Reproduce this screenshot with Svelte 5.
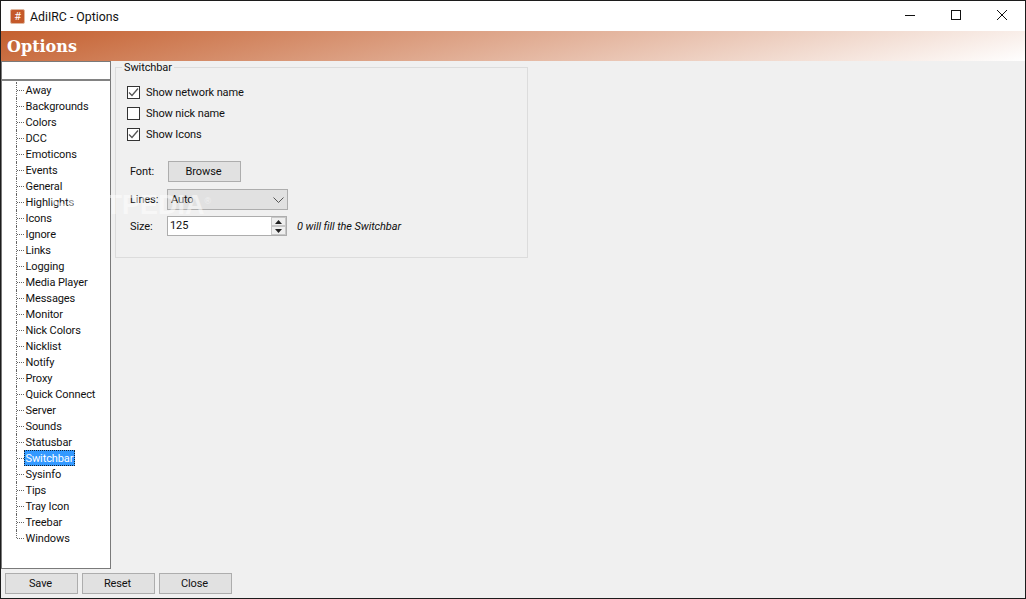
<script>
  const items = ['Away','Backgrounds','Colors','DCC','Emoticons','Events','General','Highlights','Icons','Ignore','Links','Logging','Media Player','Messages','Monitor','Nick Colors','Nicklist','Notify','Proxy','Quick Connect','Server','Sounds','Statusbar','Switchbar','Sysinfo','Tips','Tray Icon','Treebar','Windows'];
  const checks = [['Show network name',true],['Show nick name',false],['Show Icons',true]];
</script>

<div class="win">
  <header class="title">
    <span class="logo">#</span>
    <span class="ttext">AdiIRC - Options</span>
    <div class="caption">
      <svg width="46" height="30" viewBox="0 0 46 30"><path d="M18 14.5h10" stroke="#111" fill="none"/></svg>
      <svg width="46" height="30" viewBox="0 0 46 30"><rect x="18.5" y="9.5" width="9" height="9" stroke="#111" fill="none"/></svg>
      <svg width="46" height="30" viewBox="0 0 46 30"><path d="M18 9l10 10M28 9l-10 10" stroke="#111" fill="none"/></svg>
    </div>
  </header>
  <div class="banner">Options</div>
  <div class="main">
    <aside class="side">
      <div class="search"></div>
      <ul class="tree">
        {#each items as it}
          <li class="row" class:sel={it === 'Switchbar'}><span>{it}</span></li>
        {/each}
      </ul>
    </aside>
    <section class="content">
      <fieldset class="group">
        <legend>Switchbar</legend>
        <div class="checks">
          {#each checks as [label, on]}
            <div class="check">
              <span class="box">
                {#if on}<svg width="11" height="11" viewBox="0 0 11 11"><path d="M1 5.5l3 3 6-7" stroke="#555" stroke-width="1.3" fill="none"/></svg>{/if}
              </span>
              <span>{label}</span>
            </div>
          {/each}
        </div>
        <div class="frow font"><span class="lab">Font:</span><button class="btn browse">Browse</button></div>
        <div class="frow lines">
          <span class="lab">Lines:</span>
          <div class="combo"><span>Auto</span>
            <svg width="11" height="6" viewBox="0 0 11 6"><path d="M.5.5l5 5 5-5" stroke="#555" fill="none"/></svg>
          </div>
        </div>
        <div class="frow size">
          <span class="lab">Size:</span>
          <div class="spin">
            <span class="val">125</span>
            <div class="arrows">
              <span class="arr"><svg width="7" height="4" viewBox="0 0 7 4"><path d="M3.5 0L7 4H0z" fill="#222"/></svg></span>
              <span class="arr"><svg width="7" height="4" viewBox="0 0 7 4"><path d="M0 0h7L3.5 4z" fill="#222"/></svg></span>
            </div>
          </div>
          <em class="hint">0 will fill the Switchbar</em>
        </div>
      </fieldset>
    </section>
  </div>
  <footer class="foot">
    <button class="btn">Save</button>
    <button class="btn">Reset</button>
    <button class="btn">Close</button>
  </footer>
  <div class="mark">SOFTPEDIA<sup>®</sup></div>
</div>

<style>
  :global(body) { margin: 0; background: #f0f0f0; }
  .win {
    position: relative;
    width: 1026px; height: 599px; box-sizing: border-box;
    border: 1px solid #1c1c1c;
    background: #f0f0f0; overflow: hidden;
    display: flex; flex-direction: column;
    font: 11px Roboto, "Liberation Sans", sans-serif;
    letter-spacing: -0.1px;
    color: #111;
  }
  .title { height: 30px; background: #fff; display: flex; align-items: center; flex: none; }
  .logo {
    width: 13px; height: 13px; margin-left: 9px; border-radius: 2px;
    background: #c4592a; color: #fff; font-size: 11px; line-height: 13px; text-align: center;
    border: 1px solid #e0b8a0; box-sizing: content-box;
  }
  .ttext { margin-left: 5px; padding-top: 1px; font-size: 12.3px; letter-spacing: 0; }
  .caption { margin-left: auto; display: flex; }
  .caption svg { display: block; }
  .banner {
    height: 30px; flex: none; box-sizing: border-box; padding: 1px 0 0 6px;
    background: linear-gradient(166deg, #c45f2e 0%, #fff 100%);
    color: #fff; font: bold 16px/29px "DejaVu Serif", serif; letter-spacing: 0;
  }
  .main { flex: 1; display: flex; min-height: 0; }
  .side { width: 110px; flex: none; display: flex; flex-direction: column; }
  .search { height: 20px; flex: none; box-sizing: border-box; background: #fff; border: 1px solid #7a7a7a; border-bottom: 2px solid #828282; }
  .tree {
    flex: 1; margin: 0; padding: 1px 0 0; list-style: none; background: #fff;
    border: 1px solid #7a7a7a; border-top: none;
  }
  .row { position: relative; height: 16px; line-height: 18px; padding-left: 22px; }
  .row::before { content: ""; position: absolute; left: 14px; top: 0; bottom: 0; border-left: 1px dotted #666; }
  .row:last-child::before { bottom: 8px; }
  .row::after { content: ""; position: absolute; left: 15px; width: 7px; top: 8px; border-top: 1px dotted #666; }
  .row span { display: inline-block; height: 16px; padding: 0 1.5px; box-sizing: border-box; white-space: nowrap; vertical-align: top; }
  .row.sel span { background: #3399ff; color: #fff; outline: 1px dotted #123; outline-offset: -1px; }
  .content { flex: 1; padding: 0 0 0 4px; }
  .group {
    width: 413px; height: 197px; box-sizing: border-box; margin: 0; padding: 0 0 0 11px;
    border: 1px solid #dcdcdc; min-inline-size: 0;
  }
  legend { padding: 1px 2px 0; margin-left: -5px; line-height: 12px; }
  .checks { display: flex; flex-direction: column; gap: 8px; margin-top: 12px; }
  .check { display: flex; align-items: center; height: 13px; gap: 6px; }
  .box { width: 13px; height: 13px; box-sizing: border-box; border: 1px solid #333; background: #fff; display: flex; align-items: center; justify-content: center; }
  .frow { display: flex; align-items: center; position: relative; }
  .lab { width: 41px; padding-left: 3px; box-sizing: border-box; flex: none; }
  .font { margin-top: 20px; height: 21px; }
  .lines { margin-top: 7px; height: 21px; }
  .size { margin-top: 6px; height: 20px; }
  .btn {
    width: 73px; height: 21px; padding: 0 2px 0 0; box-sizing: border-box;
    background: #e1e1e1; border: 1px solid #adadad; border-radius: 0;
    font: inherit; letter-spacing: inherit; color: #111;
  }
  .combo {
    width: 121px; height: 21px; box-sizing: border-box; margin-left: -1px;
    background: #e1e1e1; border: 1px solid #adadad;
    display: flex; align-items: center; justify-content: space-between; padding: 0 3px;
  }
  .spin {
    width: 120px; height: 20px; box-sizing: border-box; margin-left: -1px;
    background: #fff; border: 1px solid #adadad; display: flex; justify-content: space-between; align-items: stretch;
    line-height: 18px; padding-left: 2px;
  }
  .arrows { width: 15px; display: flex; flex-direction: column; background: #f0f0f0; }
  .arr { flex: 1; display: flex; align-items: center; justify-content: center; border: 1px solid #c8c8c8; background: #efefef; }
  .arr svg { display: block; }
  .hint { margin-left: 10px; }
  .foot { height: 29px; flex: none; display: flex; gap: 4px; padding: 4px 0 0 4px; box-sizing: border-box; }
  .mark {
    position: absolute; left: 49px; top: 185px;
    font: bold 27px/30px "Liberation Sans", sans-serif; letter-spacing: 0;
    color: #fff; opacity: 0.5; pointer-events: none;
  }
  .mark sup { font-size: 9px; font-weight: normal; }
</style>
